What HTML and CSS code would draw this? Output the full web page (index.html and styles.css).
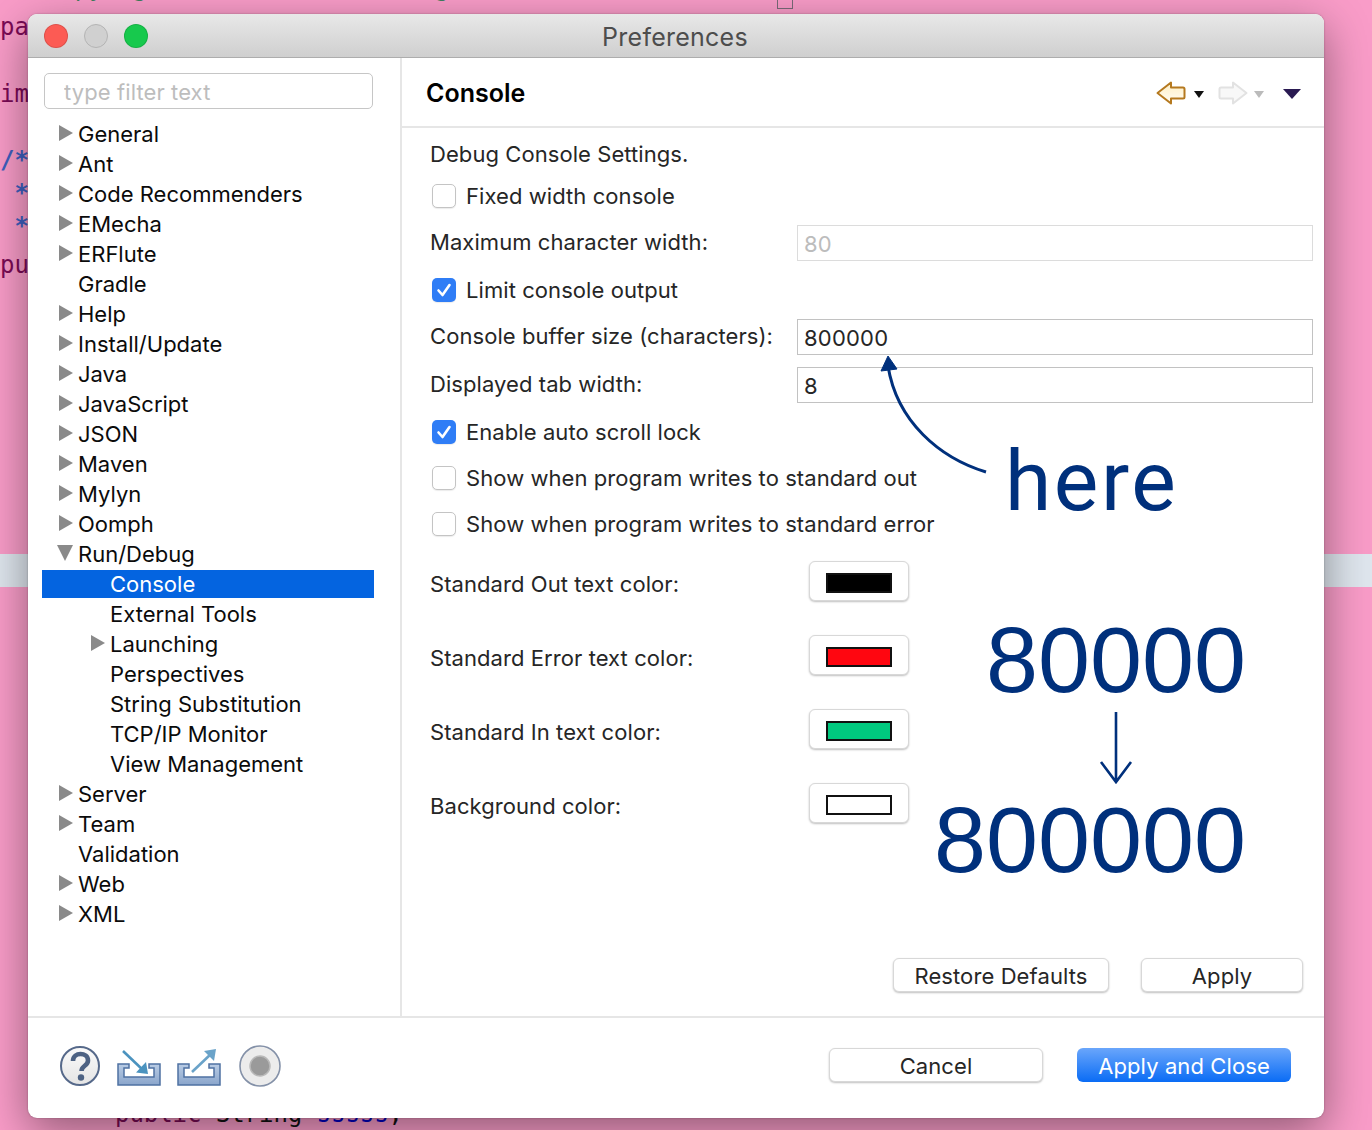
FILE: index.html
```html
<!DOCTYPE html>
<html lang="en">
<head>
  <meta charset="UTF-8" />
  <title>Preferences</title>
  <link rel="stylesheet" href="styles.css">
</head>
<body>
  <div class="desktop">
    <div class="band"></div>
    <span class="code code-top">Copyright and other auth rights to this source code</span>
    <span class="code-box"></span>
    <span class="code code-pa kw">pa</span>
    <span class="code code-im kw">im</span>
    <span class="code code-c1 doc">/*</span>
    <span class="code code-c2 doc"> *</span>
    <span class="code code-c3 doc"> *</span>
    <span class="code code-pu kw">pu</span>
    <span class="code code-bottom"><span class="kw">public</span> String <span class="fld">sssss</span>;</span>

    <div class="window">
      <div class="titlebar">
        <span class="light light-red"></span>
        <span class="light light-gray"></span>
        <span class="light light-green"></span>
        <div class="title">Preferences</div>
      </div>

      <div class="body">
        <aside class="sidebar">
          <input class="filter" placeholder="type filter text" />
          <ul class="tree">
            <li class="node closed">General</li>
            <li class="node closed">Ant</li>
            <li class="node closed">Code Recommenders</li>
            <li class="node closed">EMecha</li>
            <li class="node closed">ERFlute</li>
            <li class="node">Gradle</li>
            <li class="node closed">Help</li>
            <li class="node closed">Install/Update</li>
            <li class="node closed">Java</li>
            <li class="node closed">JavaScript</li>
            <li class="node closed">JSON</li>
            <li class="node closed">Maven</li>
            <li class="node closed">Mylyn</li>
            <li class="node closed">Oomph</li>
            <li class="node open">Run/Debug</li>
            <li class="node sub selected">Console</li>
            <li class="node sub">External Tools</li>
            <li class="node sub closed">Launching</li>
            <li class="node sub">Perspectives</li>
            <li class="node sub">String Substitution</li>
            <li class="node sub">TCP/IP Monitor</li>
            <li class="node sub">View Management</li>
            <li class="node closed">Server</li>
            <li class="node closed">Team</li>
            <li class="node">Validation</li>
            <li class="node closed">Web</li>
            <li class="node closed">XML</li>
          </ul>
        </aside>

        <main class="panel">
          <div class="panel-head">
            <h1>Console</h1>
            <div class="nav-icons">
              <svg class="nav-arrow" width="30" height="24" viewBox="0 0 30 24">
                <defs>
                  <linearGradient id="back" x1="0" y1="0" x2="0" y2="1">
                    <stop offset="0" stop-color="#ffefc4" />
                    <stop offset="1" stop-color="#fffdf6" />
                  </linearGradient>
                </defs>
                <path d="M1.500 12 L15 1.500 V6.500 H27 Q28.500 6.500 28.500 8 V16 Q28.500 17.500 27 17.500 H15 V22.500 Z" fill="url(#back)" stroke="#b5791f" stroke-width="2" stroke-linejoin="round" />
              </svg>
              <span class="tri tri-black"></span>
              <svg class="nav-arrow nav-fwd" width="30" height="24" viewBox="0 0 30 24">
                <path d="M28.500 12 L15 1.500 V6.500 H3 Q1.500 6.500 1.500 8 V16 Q1.500 17.500 3 17.500 H15 V22.500 Z" fill="#f8f8f8" stroke="#e2e2e2" stroke-width="2" stroke-linejoin="round" />
              </svg>
              <span class="tri tri-gray"></span>
              <span class="tri-menu"></span>
            </div>
          </div>

          <div class="settings">
            <div class="row row-text">Debug Console Settings.</div>

            <label class="row row-check">
              <span class="check"></span>Fixed width console
            </label>
            <div class="row row-field">
              <span class="field-label">Maximum character width:</span>
              <span class="field field-off">80</span>
            </div>
            <label class="row row-check">
              <span class="check on"><svg width="24" height="24" viewBox="0 0 24 24"><path d="M6.500 12.500 L10.500 17 L17.500 7" fill="none" stroke="#fff" stroke-width="2.600" stroke-linecap="round" stroke-linejoin="round" /></svg></span>Limit console output
            </label>
            <div class="row row-field">
              <span class="field-label">Console buffer size (characters):</span>
              <span class="field">800000</span>
            </div>
            <div class="row row-field tight">
              <span class="field-label">Displayed tab width:</span>
              <span class="field">8</span>
            </div>
            <label class="row row-check">
              <span class="check on"><svg width="24" height="24" viewBox="0 0 24 24"><path d="M6.500 12.500 L10.500 17 L17.500 7" fill="none" stroke="#fff" stroke-width="2.600" stroke-linecap="round" stroke-linejoin="round" /></svg></span>Enable auto scroll lock
            </label>
            <label class="row row-check loose">
              <span class="check"></span>Show when program writes to standard out
            </label>
            <label class="row row-check loose">
              <span class="check"></span>Show when program writes to standard error
            </label>

            <div class="colors">
              <div class="color-row">
                <span class="color-label">Standard Out text color:</span>
                <span class="color-btn"><span class="swatch swatch-black"></span></span>
              </div>
              <div class="color-row">
                <span class="color-label">Standard Error text color:</span>
                <span class="color-btn"><span class="swatch swatch-red"></span></span>
              </div>
              <div class="color-row">
                <span class="color-label">Standard In text color:</span>
                <span class="color-btn"><span class="swatch swatch-green"></span></span>
              </div>
              <div class="color-row">
                <span class="color-label">Background color:</span>
                <span class="color-btn"><span class="swatch swatch-white"></span></span>
              </div>
            </div>
          </div>

          <div class="panel-actions">
            <button class="btn btn-restore">Restore Defaults</button>
            <button class="btn btn-apply">Apply</button>
          </div>
        </main>
      </div>

      <footer class="footer">
        <div class="tool-icons">
          <svg width="42" height="42" viewBox="0 0 42 42">
            <defs>
              <linearGradient id="helpbg" x1="0" y1="0" x2="0" y2="1">
                <stop offset="0" stop-color="#fbfbfb" />
                <stop offset="1" stop-color="#e4e4e4" />
              </linearGradient>
            </defs>
            <circle cx="21" cy="21" r="19" fill="url(#helpbg)" stroke="#56698a" stroke-width="2" />
            <path d="M14 16 C14 6.500 29 7 29 15.500 C29 21 22.500 20.500 22.500 26" fill="none" stroke="#4d6283" stroke-width="4.600" />
            <circle cx="22" cy="32.500" r="3.200" fill="#4d6283" />
          </svg>
          <svg width="44" height="42" viewBox="0 0 44 42">
            <defs>
              <linearGradient id="tray" x1="0" y1="0" x2="0" y2="1">
                <stop offset="0" stop-color="#b9cce5" />
                <stop offset="1" stop-color="#8aa5cb" />
              </linearGradient>
            </defs>
            <path d="M1 19 H12 V23 H7 V32 H37 V23 H32 V19 H43 V40 H1 Z" fill="url(#tray)" stroke="#4f72a3" stroke-width="1.500" />
            <path d="M6 6 L27 26" stroke="#4b93bf" stroke-width="2.600" fill="none" />
            <path d="M31 29 L19 27.500 L29 17 Z" fill="#4b93bf" />
          </svg>
          <svg width="44" height="42" viewBox="0 0 44 42">
            <path d="M1 19 H12 V23 H7 V32 H37 V23 H32 V19 H43 V40 H1 Z" fill="url(#tray)" stroke="#4f72a3" stroke-width="1.500" />
            <path d="M15 27 L35 8" stroke="#6aa3c9" stroke-width="2.600" fill="none" />
            <path d="M39 4 L37 16 L27 6 Z" fill="#6aa3c9" />
          </svg>
          <svg class="stop-icon" width="42" height="42" viewBox="0 0 42 42">
            <circle cx="21" cy="21" r="20" fill="#ececec" stroke="#8491a8" stroke-width="1.600" />
            <circle cx="21" cy="21" r="10" fill="#9a9a9a" stroke="#b9b9b9" stroke-width="1.500" />
          </svg>
        </div>
        <div class="footer-actions">
          <button class="btn btn-cancel">Cancel</button>
          <button class="btn btn-primary">Apply and Close</button>
        </div>
      </footer>

      <!-- hand drawn notes on top of the dialog -->
      <svg class="notes" width="1296" height="1104" viewBox="0 0 1296 1104">
        <path d="M958 458 C912 444 869 408 860 352" fill="none" stroke="#00307c" stroke-width="3" />
        <path d="M860 342 L853 357 L869 355 Z" fill="#00307c" stroke="#00307c" stroke-width="1" />
        <path d="M1088 698 V768 M1073 748 L1088 768 L1103 748" fill="none" stroke="#00307c" stroke-width="2.600" />
      </svg>
      <span class="note note-here">here</span>
      <span class="note note-old">80000</span>
      <span class="note note-new">800000</span>
    </div>
  </div>
</body>
</html>
```

FILE: styles.css
```css
html, body {
  margin: 0;
  padding: 0;
}
body {
  font-family: Inter, "Noto Sans", sans-serif;
  font-size: 22px;
  color: #262626;
  overflow: hidden;
}
ul {
  list-style: none;
  margin: 0;
  padding: 0;
}

/* desktop behind the dialog */
.desktop {
  position: relative;
  width: 1372px;
  height: 1130px;
  overflow: hidden;
  background: #f99cc8;
}
.band {
  position: absolute;
  left: 0;
  right: 0;
  top: 554px;
  height: 33px;
  background: #dfe6ee;
}
.code {
  position: absolute;
  left: 0;
  font-family: "DejaVu Sans Mono", monospace;
  font-size: 24px;
  letter-spacing: -0.05px;
  line-height: 33px;
  color: #111;
  white-space: pre;
}
.kw { color: #7a0a55; font-weight: 500; }
.doc { color: #3f5fbf; font-weight: 600; }
.fld { color: #0000c0; }
.code-top { left: 46px; top: -28px; color: #3f7f5f; }
.code-box {
  position: absolute;
  left: 777px;
  top: -2px;
  width: 14px;
  height: 9px;
  border: 1px solid #7a6a78;
}
.code-pa { top: 11px; }
.code-im { top: 78px; }
.code-c1 { top: 144px; }
.code-c2 { top: 177px; }
.code-c3 { top: 210px; }
.code-pu { top: 249px; }
.code-bottom { left: 115px; top: 1098px; }

/* dialog */
.window {
  position: absolute;
  left: 28px;
  top: 14px;
  width: 1296px;
  height: 1104px;
  display: flex;
  flex-direction: column;
  background: #fff;
  border-radius: 9px;
  box-shadow: 0 14px 46px rgba(0, 0, 0, 0.42), 0 0 2px rgba(0, 0, 0, 0.3);
}
.titlebar {
  position: relative;
  display: flex;
  align-items: center;
  flex: 0 0 44px;
  box-sizing: border-box;
  padding-left: 16px;
  gap: 16px;
  background: linear-gradient(#e8e8e8, #cfcfcf);
  border-bottom: 1px solid #adadad;
  border-radius: 9px 9px 0 0;
}
.light {
  width: 24px;
  height: 24px;
  box-sizing: border-box;
  border-radius: 50%;
  border: 1px solid rgba(0, 0, 0, 0.12);
}
.light-red { background: #fc5b54; }
.light-gray { background: #d0d0d0; border-color: #b4b4b4; }
.light-green { background: #17c94d; }
.title {
  position: absolute;
  left: 0;
  right: 2px;
  top: 8px;
  text-align: center;
  font-size: 25px;
  letter-spacing: 0.25px;
  color: #4d4d4d;
}

.body {
  display: flex;
  flex: 1;
  min-height: 0;
  border-bottom: 2px solid #e6e6e6;
}

/* left tree */
.sidebar {
  box-sizing: border-box;
  width: 374px;
  flex: none;
  padding: 15px 26px 0 14px;
  border-right: 2px solid #e6e6e6;
}
.filter {
  display: block;
  box-sizing: border-box;
  width: 329px;
  height: 36px;
  margin: 0 0 11px 2px;
  padding: 2px 0 0 19px;
  font: 22px Inter, "Noto Sans", sans-serif;
  letter-spacing: 0.1px;
  border: 1px solid #c6c6c6;
  border-radius: 5px;
  outline: none;
}
.filter::placeholder {
  color: #bdbdbd;
}
.tree {
  display: flex;
  flex-direction: column;
  gap: 2px;
}
.node {
  position: relative;
  height: 28px;
  line-height: 28px;
  padding-left: 36px;
  color: #0b0b0b;
}
.sub {
  padding-left: 68px;
}
.closed::before {
  content: "";
  position: absolute;
  left: 17px;
  top: 5px;
  border-style: solid;
  border-width: 8.500px 0 8.500px 14px;
  border-color: transparent transparent transparent #8a8a8a;
}
.sub.closed::before {
  left: 49px;
}
.open::before {
  content: "";
  position: absolute;
  left: 15px;
  top: 5px;
  border-style: solid;
  border-width: 16px 8.500px 0 8.500px;
  border-color: #8a8a8a transparent transparent transparent;
}
.selected {
  background: #0464e0;
  color: #fff;
}

/* right panel */
.panel {
  flex: 1;
  display: flex;
  flex-direction: column;
  min-width: 0;
}
.panel-head {
  display: flex;
  align-items: center;
  justify-content: space-between;
  box-sizing: border-box;
  height: 70px;
  padding: 2px 22px 0 24px;
  border-bottom: 2px solid #e6e6e6;
}
.panel-head h1 {
  margin: 0;
  font-size: 25px;
  font-weight: 600;
  color: #000;
}
.nav-icons {
  display: flex;
  align-items: center;
  margin-right: 1px;
}
.nav-arrow {
  display: block;
}
.tri {
  width: 0;
  height: 0;
  margin: 3px 0 0 8px;
  border-style: solid;
  border-width: 7px 5px 0 5px;
  border-color: #111 transparent transparent transparent;
}
.tri-gray {
  margin-left: 6px;
  border-top-color: #bbb;
}
.nav-fwd {
  margin-left: 14px;
}
.tri-menu {
  width: 0;
  height: 0;
  margin: 1px 0 0 19px;
  border-style: solid;
  border-width: 10px 9.500px 0 9.500px;
  border-color: #2a1a52 transparent transparent transparent;
}

.settings {
  flex: 1;
  padding: 12px 11px 0 28px;
  letter-spacing: 0.07px;
}
.row {
  display: flex;
  align-items: center;
  margin-top: 15px;
}
.row-text {
  height: 28px;
  margin-top: 0;
}
.row-check {
  height: 28px;
}
.row-text + .row-check {
  margin-top: 14px;
}
.row-field {
  height: 36px;
}
.tight {
  margin-top: 12px;
}
.loose {
  margin-top: 18px;
}
.check {
  box-sizing: border-box;
  width: 24px;
  height: 24px;
  margin: 0 10px 0 2px;
  background: #fff;
  border: 1px solid #c4c4c4;
  border-radius: 5px;
  box-shadow: 0 1px 1px rgba(0, 0, 0, 0.08);
}
.check.on {
  background: #2f7df6;
  border: none;
}
.check svg {
  display: block;
}
.field-label {
  width: 367px;
  flex: none;
  padding-bottom: 2px;
}
.field {
  flex: 1;
  box-sizing: border-box;
  height: 36px;
  line-height: 37px;
  padding-left: 6px;
  letter-spacing: 0.2px;
  border: 1px solid #c2c2c2;
}
.field-off {
  color: #bcbcbc;
  border-color: #dcdcdc;
}

.colors {
  display: flex;
  flex-direction: column;
  gap: 34px;
  margin-top: 23px;
}
.color-row {
  display: flex;
  align-items: center;
}
.color-label {
  width: 379px;
  flex: none;
  padding-top: 6px;
}
.color-btn {
  display: flex;
  align-items: center;
  justify-content: center;
  box-sizing: border-box;
  width: 100px;
  height: 40px;
  padding-top: 4px;
  background: #fff;
  border: 1px solid #d8d8d8;
  border-radius: 6px;
  box-shadow: 0 1px 2px rgba(0, 0, 0, 0.25);
}
.swatch {
  box-sizing: border-box;
  width: 66px;
  height: 20px;
  border: 2px solid #111;
}
.swatch-black { background: #000; }
.swatch-red { background: #ff0610; }
.swatch-green { background: #00c97f; }
.swatch-white { background: #fff; }

.panel-actions {
  display: flex;
  justify-content: flex-end;
  gap: 32px;
  padding: 0 21px 24px 0;
}
.btn {
  box-sizing: border-box;
  height: 34px;
  padding: 2px 0 0;
  font: 22px Inter, "Noto Sans", sans-serif;
  letter-spacing: 0.1px;
  color: #262626;
  background: #fff;
  border: 1px solid #d8d8d8;
  border-radius: 6px;
  box-shadow: 0 1px 2px rgba(0, 0, 0, 0.25);
}
.btn-restore { width: 216px; }
.btn-apply { width: 162px; }
.btn-cancel { width: 214px; }
.btn-primary {
  width: 214px;
  color: #fff;
  border: none;
  background: linear-gradient(#6aa6fb, #0a6cf5);
  box-shadow: none;
}

/* bottom bar */
.footer {
  display: flex;
  align-items: center;
  justify-content: space-between;
  flex: 0 0 100px;
  box-sizing: border-box;
  padding: 0 33px 6px 31px;
  border-radius: 0 0 9px 9px;
}
.tool-icons {
  display: flex;
  align-items: center;
  gap: 16px;
  margin-top: 2px;
}
.tool-icons svg {
  display: block;
}
.stop-icon {
  margin-left: 2px;
}
.footer-actions {
  display: flex;
  gap: 34px;
}

/* annotations */
.notes {
  position: absolute;
  left: 0;
  top: 0;
  pointer-events: none;
}
.note {
  position: absolute;
  color: #00307c;
  line-height: 1;
  white-space: nowrap;
}
.note-here {
  left: 977px;
  top: 426px;
  font-family: Roboto, sans-serif;
  font-size: 84px;
  letter-spacing: 2.6px;
}
.note-old {
  right: 78px;
  top: 599px;
  font-family: "Liberation Sans", sans-serif;
  font-size: 93.500px;
}
.note-new {
  right: 78px;
  top: 779px;
  font-family: "Liberation Sans", sans-serif;
  font-size: 93.500px;
}
```
